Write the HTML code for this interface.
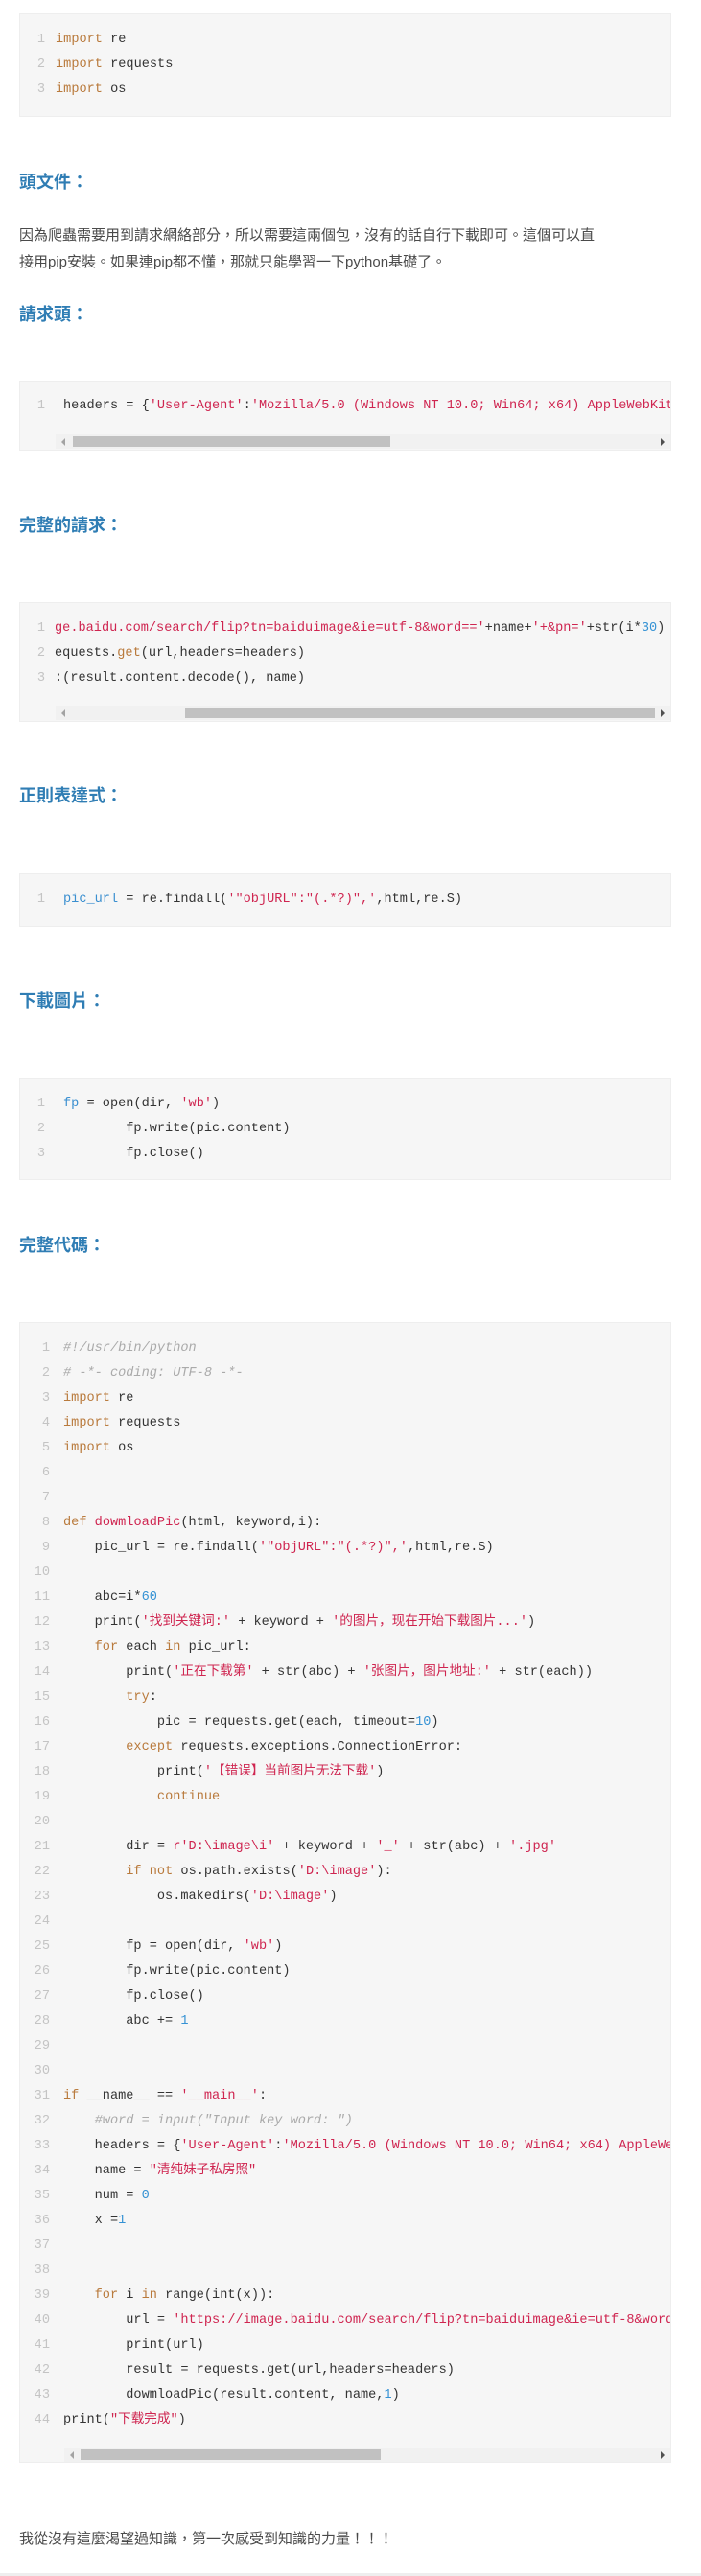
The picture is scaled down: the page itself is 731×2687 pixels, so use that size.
<!DOCTYPE html>
<html><head><meta charset="utf-8">
<style>
*{margin:0;padding:0;box-sizing:border-box}
html,body{width:731px;height:2687px;background:#fff;overflow:hidden;position:relative}
body{font-family:"Liberation Sans","Noto Sans CJK TC",sans-serif}
.h{position:absolute;left:20px;font-size:18px;font-weight:bold;color:#2f7db4;line-height:24px;font-family:"Liberation Sans","Noto Sans CJK TC",sans-serif}
.p{position:absolute;left:20px;font-size:15px;color:#4a4a4a;line-height:28px;font-family:"Liberation Sans","Noto Sans CJK TC",sans-serif}
.b{position:absolute;left:20px;width:680px;background:#f6f6f6;border:1px solid #eee;overflow:hidden}
.ln{position:absolute;left:6px;width:20px;text-align:right;color:#c4c4c4}
.ln,.cd{top:14px;font-family:"Liberation Mono","Noto Sans CJK SC",monospace;font-size:13.6px;line-height:26px;white-space:pre}
.cd{position:absolute;color:#333;right:0;overflow:hidden}
.k{color:#b97a3c}.s{color:#cf2550}.n{color:#3592d4}.c{color:#aaa;font-style:italic}.v{color:#3a8fd0}.f{color:#cf2550}
.sb{position:absolute;height:15px;background:#f1f1f1;right:0}
.th{position:absolute;top:2px;height:11px;background:#c1c1c1}
.al{position:absolute;top:4px;width:0;height:0;border-top:4px solid transparent;border-bottom:4px solid transparent;border-right:4px solid #a3a3a3}
.ar{position:absolute;top:4px;right:6px;width:0;height:0;border-top:4px solid transparent;border-bottom:4px solid transparent;border-left:4px solid #505050}
</style></head><body>

<div class="b" style="top:14px;height:108px">
<div class="ln">1
2
3</div>
<div class="cd" style="left:37px"><span class="k">import</span> re
<span class="k">import</span> requests
<span class="k">import</span> os</div>
</div>

<div class="h" style="top:178px">頭文件：</div>
<div class="p" style="top:232px">因為爬蟲需要用到請求網絡部分，所以需要這兩個包，沒有的話自行下載即可。這個可以直<br>接用pip安裝。如果連pip都不懂，那就只能學習一下python基礎了。</div>
<div class="h" style="top:316px">請求頭：</div>

<div class="b" style="top:397px;height:73px">
<div class="ln" style="top:13px">1</div>
<div class="cd" style="left:45px;top:13px">headers = {<span class="s">'User-Agent'</span>:<span class="s">'Mozilla/5.0 (Windows NT 10.0; Win64; x64) AppleWebKit/537.36 (KHTML, like Gecko)'</span>}</div>
<div class="sb" style="top:55px;left:37px"><div class="al" style="left:6px"></div><div class="th" style="left:18px;width:331px"></div><div class="ar"></div></div>
</div>

<div class="h" style="top:536px">完整的請求：</div>

<div class="b" style="top:628px;height:125px">
<div class="ln">1
2
3</div>
<div class="cd" style="left:36px"><span class="s">ge.baidu.com/search/flip?tn=baiduimage&amp;ie=utf-8&amp;word=='</span>+name+<span class="s">'+&amp;pn='</span>+str(i*<span class="n">30</span>)
equests.<span class="k">get</span>(url,headers=headers)
:(result.content.decode(), name)</div>
<div class="sb" style="top:107px;left:37px"><div class="al" style="left:6px"></div><div class="th" style="left:135px;width:490px"></div><div class="ar"></div></div>
</div>

<div class="h" style="top:818px">正則表達式：</div>

<div class="b" style="top:911px;height:56px">
<div class="ln">1</div>
<div class="cd" style="left:45px"><span class="v">pic_url</span> = re.findall(<span class="s">'"objURL":"(.*?)",'</span>,html,re.S)</div>
</div>

<div class="h" style="top:1032px">下載圖片：</div>

<div class="b" style="top:1124px;height:107px">
<div class="ln">1
2
3</div>
<div class="cd" style="left:45px"><span class="v">fp</span> = open(dir, <span class="s">'wb'</span>)
        fp.write(pic.content)
        fp.close()</div>
</div>

<div class="h" style="top:1287px">完整代碼：</div>

<div class="b" style="top:1379px;height:1190px">
<div class="ln" style="width:26px;left:5px">1
2
3
4
5
6
7
8
9
10
11
12
13
14
15
16
17
18
19
20
21
22
23
24
25
26
27
28
29
30
31
32
33
34
35
36
37
38
39
40
41
42
43
44</div>
<div class="cd" style="left:45px"><span class="c">#!/usr/bin/python</span>
<span class="c"># -*- coding: UTF-8 -*-</span>
<span class="k">import</span> re
<span class="k">import</span> requests
<span class="k">import</span> os


<span class="k">def</span> <span class="f">dowmloadPic</span>(html, keyword,i):
    pic_url = re.findall(<span class="s">'"objURL":"(.*?)",'</span>,html,re.S)

    abc=i*<span class="n">60</span>
    print(<span class="s">'找到关键词:'</span> + keyword + <span class="s">'的图片，现在开始下载图片...'</span>)
    <span class="k">for</span> each <span class="k">in</span> pic_url:
        print(<span class="s">'正在下载第'</span> + str(abc) + <span class="s">'张图片，图片地址:'</span> + str(each))
        <span class="k">try</span>:
            pic = requests.get(each, timeout=<span class="n">10</span>)
        <span class="k">except</span> requests.exceptions.ConnectionError:
            print(<span class="s">'【错误】当前图片无法下载'</span>)
            <span class="k">continue</span>

        dir = <span class="s">r'D:\image\i'</span> + keyword + <span class="s">'_'</span> + str(abc) + <span class="s">'.jpg'</span>
        <span class="k">if</span> <span class="k">not</span> os.path.exists(<span class="s">'D:\image'</span>):
            os.makedirs(<span class="s">'D:\image'</span>)

        fp = open(dir, <span class="s">'wb'</span>)
        fp.write(pic.content)
        fp.close()
        abc += <span class="n">1</span>


<span class="k">if</span> __name__ == <span class="s">'__main__'</span>:
    <span class="c">#word = input("Input key word: ")</span>
    headers = {<span class="s">'User-Agent'</span>:<span class="s">'Mozilla/5.0 (Windows NT 10.0; Win64; x64) AppleWebKit/537.36'</span>}
    name = <span class="s">"清纯妹子私房照"</span>
    num = <span class="n">0</span>
    x =<span class="n">1</span>


    <span class="k">for</span> i <span class="k">in</span> range(int(x)):
        url = <span class="s">'https://image.baidu.com/search/flip?tn=baiduimage&amp;ie=utf-8&amp;word='</span>+name
        print(url)
        result = requests.get(url,headers=headers)
        dowmloadPic(result.content, name,<span class="n">1</span>)
print(<span class="s">"下载完成"</span>)</div>
<div class="sb" style="top:1173px;left:46px"><div class="al" style="left:6px"></div><div class="th" style="left:17px;width:313px"></div><div class="ar"></div></div>
</div>

<div class="p" style="top:2635px">我從沒有這麼渴望過知識，第一次感受到知識的力量！！！</div>
<div style="position:absolute;left:0;top:2684px;width:731px;height:3px;background:#eee"></div>
</body></html>
